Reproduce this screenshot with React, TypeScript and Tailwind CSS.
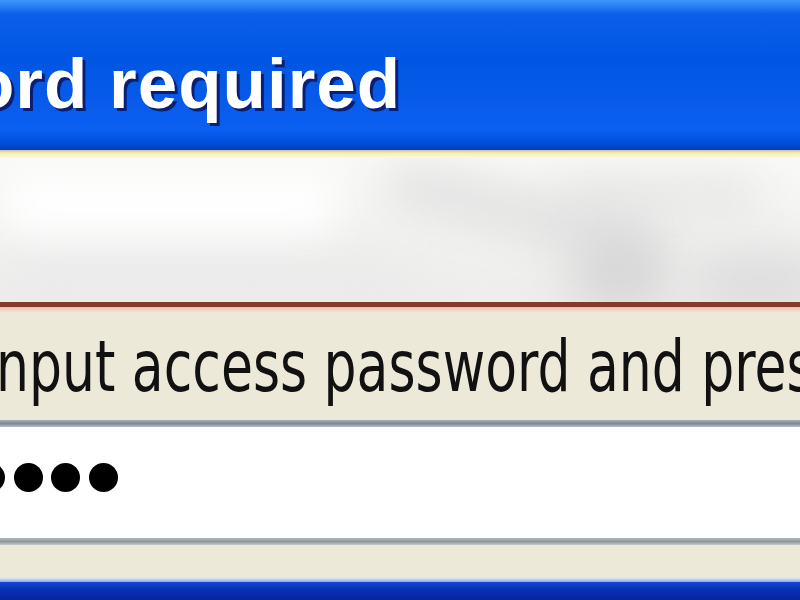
import React from "react";

const App: React.FC = () => {
  const dots = [0, 1, 2, 3];

  return (
    <div className="w-[800px] h-[600px] overflow-hidden flex flex-col bg-[#ece9d8]">
      {/* Title bar */}
      <div className="h-[150px] shrink-0 overflow-hidden bg-[linear-gradient(180deg,#3d96fb_0px,#2a80f4_6px,#0a5eea_14px,#0056e2_60px,#0a5cec_110px,#0a60f2_130px,#0050dc_142px,#0040c0_150px)]">
        <div className="pt-[48px] ml-[-29px] whitespace-nowrap font-['Liberation_Sans',Arial,sans-serif] font-bold text-[71px] leading-none tracking-[1px] text-white [text-shadow:3px_3px_0_#0b1f72]">
          ord required
        </div>
      </div>

      {/* Cream edge */}
      <div className="h-[8px] shrink-0 bg-[linear-gradient(180deg,#c9bf90_0px,#f6ecc0_3px,#fdf8dc_8px)]" />

      {/* Banner */}
      <div className="relative h-[144px] shrink-0 overflow-hidden bg-[linear-gradient(180deg,#f9f9f7_0%,#f3f3f2_50%,#ededec_100%)]">
        <div className="absolute left-[380px] top-[35px] w-[280px] h-[40px] rounded-full bg-[#dedede] blur-[24px] rotate-[14deg]" />
        <div className="absolute left-[560px] top-[22px] w-[200px] h-[30px] rounded-full bg-[#e2e2e2] blur-[22px]" />
        <div className="absolute left-[570px] top-[75px] w-[100px] h-[80px] rounded-full bg-[#d6d6d6] blur-[24px]" />
        <div className="absolute left-[690px] top-[95px] w-[140px] h-[60px] rounded-full bg-[#dcdcdc] blur-[24px]" />
        <div className="absolute left-[0px] top-[100px] w-[420px] h-[50px] rounded-full bg-[#eaeaea] blur-[24px]" />
        <div className="absolute left-[0px] top-[15px] w-[340px] h-[60px] rounded-full bg-white blur-[20px]" />
      </div>

      {/* Red rule */}
      <div className="h-[5px] shrink-0 bg-[#87392c]" />
      <div className="h-[5px] shrink-0 bg-[linear-gradient(180deg,#eebdb0_0%,#ece3d6_100%)]" />

      {/* Message */}
      <div className="h-[108px] shrink-0 pt-[35px] overflow-hidden">
        <div className="ml-[-4px] whitespace-nowrap font-['DejaVu_Sans',Tahoma,sans-serif] text-[52px] leading-none text-[#111] scale-y-[1.36] origin-[0_44px]">
          nput access password and pres
        </div>
      </div>

      {/* Password input */}
      <div className="h-[7px] shrink-0 bg-[linear-gradient(180deg,#a8b0b8_0%,#7e8892_50%,#b8bec4_100%)]" />
      <div className="h-[111px] shrink-0 bg-white pt-[36px] overflow-hidden">
        <div className="flex gap-[8.5px] ml-[-24px]">
          {dots.map((d) => (
            <span key={d} className="block w-[29px] h-[29px] rounded-full bg-black" />
          ))}
        </div>
      </div>
      <div className="h-[7px] shrink-0 bg-[linear-gradient(180deg,#b4babe_0%,#8f979d_50%,#c4c8ca_100%)]" />

      {/* Bottom of dialog */}
      <div className="h-[33px] shrink-0 bg-[#ece9d8]" />
      <div className="h-[4px] shrink-0 bg-[linear-gradient(180deg,#dfe6f4_0%,#8aa6ea_100%)]" />
      <div className="flex-1 bg-[linear-gradient(180deg,#1448d6_0%,#0a30b8_40%,#08249c_100%)]" />
    </div>
  );
};

export default App;
